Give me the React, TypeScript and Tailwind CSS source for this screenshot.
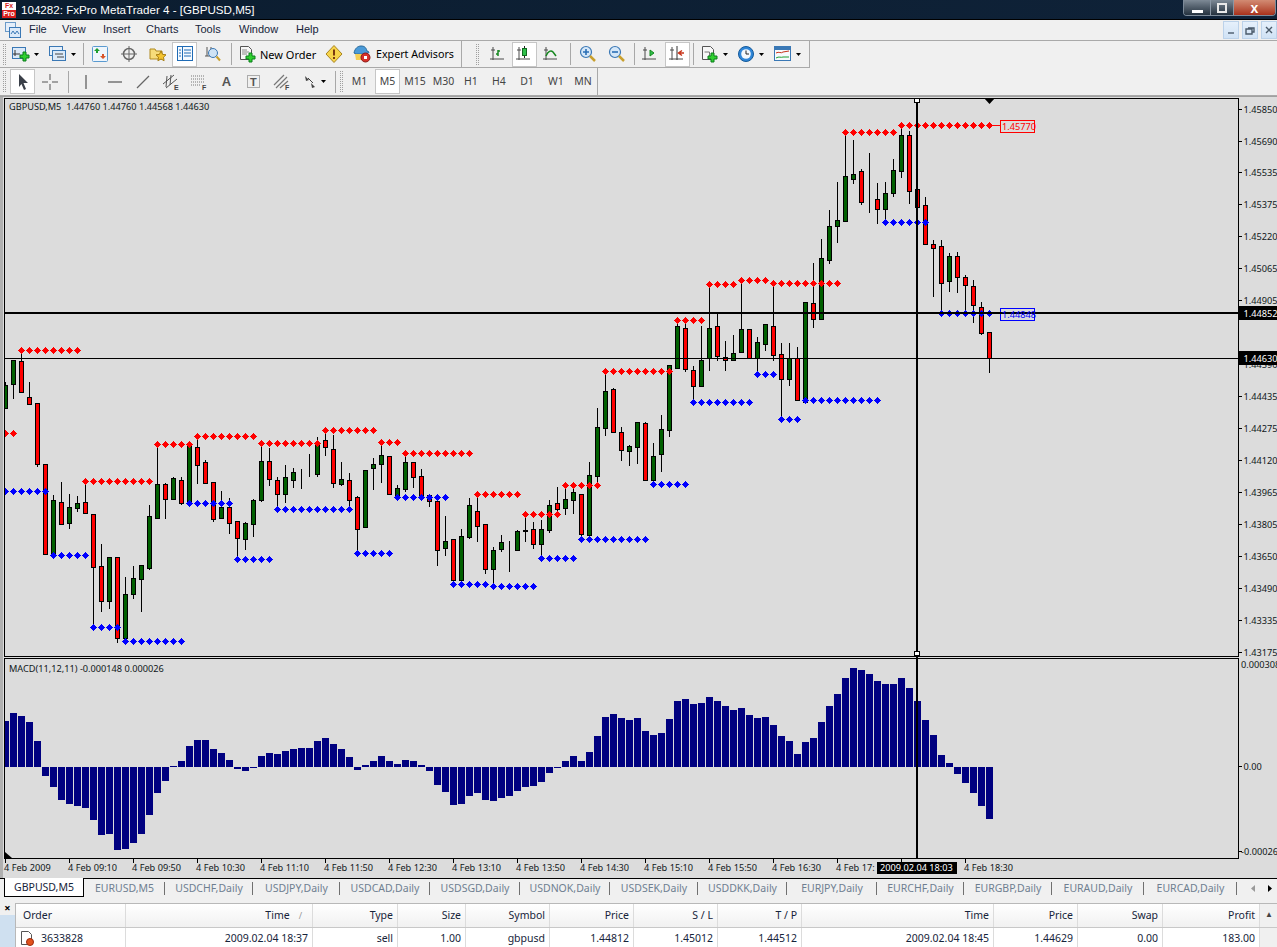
import type { ReactNode } from 'react';

// candle rows as read off the chart: [high, bodyTop, bodyBottom, low, colour], stored at 3x
type Candle = [number, number, number, number, 'g' | 'r'];

const CANDLES_A: Candle[] = [
  [123,135,205,205,'g'],[60,60,133,173,'g'],[40,63,157,157,'r'],[123,171,193,193,'r'],[190,190,371,377,'r'],
  [373,373,643,643,'r'],[462,481,643,643,'g'],[423,487,551,551,'r'],[459,501,548,563,'g'],[465,489,503,513,'g'],
  [430,487,518,518,'r'],[523,523,680,860,'r'],[609,679,782,812,'r'],[648,651,782,803,'g'],[652,652,893,905,'r'],
  [708,763,893,893,'g'],[675,715,761,773,'g'],[675,676,716,812,'g'],[492,529,684,686,'g'],[315,433,533,533,'g'],
  [427,433,476,533,'r'],[408,415,476,476,'g'],[408,421,488,491,'r'],[315,318,485,490,'g'],[295,322,374,428,'r'],
  [358,367,428,428,'r'],[427,427,536,542,'r'],[450,502,533,533,'g'],[471,502,548,578,'r'],[544,544,593,655,'r'],
  [543,550,596,627,'g'],[475,481,551,587,'g'],[315,364,479,482,'g'],[320,364,418,435,'r'],[408,421,461,505,'r'],
  [372,412,461,486,'g'],[380,397,419,440,'g'],[385,403,403,444,'g'],[340,397,397,408,'g'],[289,312,401,408,'g'],
  [280,301,320,345,'r'],[282,328,428,440,'r'],[363,418,431,434,'g'],[396,421,479,505,'r'],[465,472,566,640,'r'],
  [388,391,560,560,'g'],[351,373,383,446,'g'],[310,346,371,425,'g'],[349,349,461,461,'r'],[433,445,467,470,'g'],
  [345,367,446,452,'g'],[363,367,410,440,'r'],[385,409,464,464,'r'],[460,466,484,497,'r'],[484,484,629,675,'r'],
  [525,604,623,645,'g'],[598,598,719,730,'r'],[565,589,719,722,'g'],[472,496,590,593,'g'],[470,514,557,602,'r'],
  [553,553,686,698,'r'],[618,631,686,740,'g'],[582,607,627,632,'g'],[601,610,610,692,'g'],[568,574,629,629,'g'],
  [530,570,572,603,'g'],[543,568,611,623,'r'],[537,568,611,655,'g'],[478,496,570,576,'g'],[438,490,506,525,'r'],
  [445,478,503,522,'g'],[445,457,479,518,'g'],[460,463,581,590,'r'],[363,406,584,590,'g'],[201,262,407,430,'g'],
  [100,154,263,284,'g'],[142,148,275,275,'r'],[258,277,331,360,'r'],[312,319,332,374,'g'],[247,247,322,368,'g'],
];

const CANDLES_B: Candle[] = [
  [963,969,1140,1140,'r'],[1026,1068,1140,1140,'g'],[942,987,1062,1113,'g'],[796,796,990,1007,'g'],
  [660,679,803,803,'g'],[660,685,806,812,'r'],[796,811,857,905,'r'],[675,781,857,857,'g'],[553,685,775,809,'g'],
  [640,679,769,781,'r'],[720,772,781,809,'r'],[702,760,781,781,'g'],[541,688,757,757,'g'],[688,688,773,775,'r'],
  [708,727,773,823,'g'],[670,673,733,750,'g'],[550,679,766,781,'r'],[726,763,838,958,'r'],[726,775,838,855,'g'],
  [738,775,901,901,'r'],[605,606,905,905,'g'],[486,610,658,680,'r'],[415,475,658,658,'g'],[327,379,479,488,'g'],
  [243,361,379,426,'g'],[100,229,364,364,'g'],[118,223,236,248,'g'],[205,214,307,311,'r'],[157,305,307,335,'g'],
  [247,298,328,370,'r'],[243,280,328,360,'g'],[175,211,280,287,'g'],[85,106,214,230,'g'],[90,106,274,308,'r'],
  [268,268,322,322,'r'],[289,316,433,433,'r'],[418,433,445,587,'r'],[418,439,550,640,'r'],[457,469,544,572,'g'],
  [454,469,532,576,'r'],[522,532,556,640,'r'],[538,559,616,665,'r'],[604,622,700,703,'r'],[697,697,775,815,'r'],
];

// [first bar, last bar, y]
const RED_ROWS = [[2,9,350],[0,1,433],[10,18,481],[19,23,444],[24,31,436],[32,39,443],[40,46,430],[47,49,442],[50,58,453],[59,64,494],[65,69,514],[70,74,485],[75,83,371],[84,87,320],[88,91,284],[92,95,280],[96,104,283],[105,111,132],[112,123,125]];
const BLUE_ROWS = [[0,5,491],[6,10,555],[11,14,627],[15,22,641],[23,28,503],[29,33,559],[34,43,509],[44,48,553],[49,55,497],[56,60,584],[61,66,586],[67,71,558],[72,80,539],[81,85,484],[86,93,402],[94,96,374],[97,99,419],[100,109,400],[110,115,222],[117,123,313]];

const MACD = [198,174,183,201,258,363,396,435,447,453,459,495,540,537,585,582,564,537,480,414,378,333,318,273,255,255,282,294,315,342,348,339,303,294,297,288,282,279,279,258,249,267,282,306,345,330,318,303,318,327,315,318,330,348,390,411,450,447,423,414,435,438,429,423,408,396,393,381,354,339,318,303,318,291,243,186,177,189,195,189,228,240,234,192,138,132,147,144,126,138,153,165,159,180,189,186,210,243,258,297,261,249,201,153,117,69,39,45,57,78,87,87,69,99,138,195,240,300,324,357,384,414,453,492];

const PRICE_LABELS: [string, number][] = [
  ['1.45850',110],['1.45690',142],['1.45535',173],['1.45375',205],['1.45220',237],['1.45065',269],['1.44905',301],
  ['1.44590',365],['1.44435',397],['1.44275',429],['1.44120',461],['1.43965',493],['1.43805',525],['1.43650',557],
  ['1.43490',589],['1.43335',621],['1.43175',653],
];

const TIME_LABELS = ['4 Feb 2009','4 Feb 09:10','4 Feb 09:50','4 Feb 10:30','4 Feb 11:10','4 Feb 11:50','4 Feb 12:30','4 Feb 13:10','4 Feb 13:50','4 Feb 14:30','4 Feb 15:10','4 Feb 15:50','4 Feb 16:30','4 Feb 17:'];

const TABS: [string, number][] = [
  ['EURUSD,M5',81],['USDCHF,Daily',88],['USDJPY,Daily',87],['USDCAD,Daily',90],['USDSGD,Daily',90],['USDNOK,Daily',90],
  ['USDSEK,Daily',88],['USDDKK,Daily',89],['EURJPY,Daily',90],['EURCHF,Daily',87],['EURGBP,Daily',88],['EURAUD,Daily',92],['EURCAD,Daily',93],
];

function Candles() {
  const all = [
    ...CANDLES_A.map((c, i) => ({ c, i, off: 340 })),
    ...CANDLES_B.map((c, i) => ({ c, i: i + 80, off: 100 })),
  ];
  return (
    <g shapeRendering="crispEdges">
      {all.map(({ c, i, off }) => {
        const [hi, top, bot, lo, col] = c;
        const y = (v: number) => Math.round(off + v / 3) + 0.5;
        const x = 5.5 + 8 * i;
        return (
          <g key={i}>
            <line x1={x} x2={x} y1={y(hi)} y2={y(lo)} stroke="#000" />
            <rect x={x - 2} y={y(top)} width={4} height={Math.max(0, y(bot) - y(top))} fill={col === 'g' ? '#006000' : '#ff0000'} stroke="#000" />
          </g>
        );
      })}
    </g>
  );
}

function Dots({ rows, color }: { rows: number[][]; color: string }) {
  const pts: [number, number][] = [];
  rows.forEach(([a, b, y]) => {
    for (let i = a; i <= b; i++) pts.push([5.5 + 8 * i, y]);
  });
  return (
    <g fill={color} shapeRendering="crispEdges">
      {pts.map(([x, y]) => (
        <path key={`${x}-${y}`} d={`M${x - 0.5} ${y - 3}h1v1h1v1h1v1h1v1h-1v1h-1v1h-1v1h-1v-1h-1v-1h-1v-1h-1v-1h1v-1h1v-1h1z`} />
      ))}
    </g>
  );
}

function ChartView() {
  const font = "text-[9.2px] font-['Noto_Sans',sans-serif]";
  const txt = `${font} fill-[#101820]`;
  return (
    <svg width={1277} height={782} viewBox="0 96 1277 782" className="block shrink-0 bg-[#dcdcdc]">
      <Candles />
      <Dots rows={RED_ROWS} color="#ff0000" />
      <Dots rows={BLUE_ROWS} color="#0000ff" />

      {/* macd histogram */}
      <g fill="#000080" shapeRendering="crispEdges">
        {MACD.map((v, i) => {
          const y = Math.round(655 + v / 3);
          return <rect key={i} x={2 + 8 * i} y={Math.min(y, 767)} width={7} height={Math.abs(y - 767)} />;
        })}
      </g>

      {/* left edge of the mdi window hides the clipped first bar */}
      <rect x={0} y={96} width={4} height={782} fill="#dcdcdc" />
      <rect x={0} y={96} width={3} height={782} fill="#b0b0b0" />
      <line x1={0} x2={1277} y1={96.5} y2={96.5} stroke="#a0a0a0" />

      {/* level lines and crosshair */}
      <g shapeRendering="crispEdges">
        <line x1={990} x2={1000} y1={125.5} y2={125.5} stroke="#ff0000" />
        <rect x={1000.5} y={120.5} width={34} height={12} fill="#dcdcdc" stroke="#ff0000" />
        <rect x={1000.5} y={308.5} width={34} height={12} fill="#dcdcdc" stroke="#0000ff" />
        <line x1={4} x2={1238} y1={313} y2={313} stroke="#000" strokeWidth={2} />
        <line x1={4} x2={1238} y1={358.5} y2={358.5} stroke="#000" />
        <line x1={917} x2={917} y1={98} y2={858} stroke="#000" strokeWidth={2} />
        <rect x={914.5} y={98.5} width={5} height={4} fill="#fff" stroke="#000" />
        <rect x={914.5} y={651.5} width={5} height={4} fill="#fff" stroke="#000" />
      </g>
      <path d="M984 98h11l-5.500 6z" fill="#000" />
      <path d="M5 852l7 6h-7z" fill="#000" />
      <text x={1002} y={130} className={`${font} fill-[#ff0000]`}>1.45770</text>
      <text x={1002} y={318} className={`${font} fill-[#0000ff]`}>1.44848</text>

      {/* frames */}
      <g fill="none" stroke="#000" shapeRendering="crispEdges">
        <rect x={4.5} y={98.5} width={1234} height={558} />
        <rect x={4.5} y={658.5} width={1234} height={200} />
      </g>

      <text x={9} y={110} className={txt} xmlSpace="preserve">GBPUSD,M5  1.44760 1.44760 1.44568 1.44630</text>
      <text x={9} y={672} className={txt}>MACD(11,12,11) -0.000148 0.000026</text>

      {/* price axis */}
      {PRICE_LABELS.map(([p, y]) => (
        <g key={p}>
          <line x1={1239} x2={1242} y1={y - 0.5} y2={y - 0.5} stroke="#000" />
          <text x={1243.5} y={y + 3} className={txt}>{p}</text>
        </g>
      ))}
      <rect x={1239} y={306} width={38} height={14} fill="#000" />
      <text x={1243.5} y={317} className={`${font} fill-white`}>1.44852</text>
      <rect x={1239} y={351} width={38} height={14} fill="#000" />
      <text x={1243.5} y={362} className={`${font} fill-white`}>1.44630</text>
      <text x={1241} y={668} className={txt}>0.000308</text>
      <line x1={1239} x2={1242} y1={766.5} y2={766.5} stroke="#000" />
      <text x={1243.5} y={770} className={txt}>0.00</text>
      <line x1={1239} x2={1242} y1={851.5} y2={851.5} stroke="#000" />
      <text x={1241} y={855} className={txt}>-0.00026</text>

      {/* time axis */}
      {TIME_LABELS.map((t, i) => (
        <g key={t}>
          <line x1={5.5 + 64 * i} x2={5.5 + 64 * i} y1={859} y2={863} stroke="#000" />
          <text x={4 + 64 * i} y={871} className={txt}>{t}</text>
        </g>
      ))}
      <line x1={901.5} x2={901.5} y1={859} y2={863} stroke="#000" />
      <line x1={965.5} x2={965.5} y1={859} y2={863} stroke="#000" />
      <rect x={877} y={862} width={80} height={12} fill="#000" />
      <text x={880} y={871} className={`${font} fill-white`}>2009.02.04 18:03</text>
      <text x={964} y={871} className={txt}>4 Feb 18:30</text>
    </svg>
  );
}

/* ---------- toolbar icons ---------- */

const Plus = ({ x, y }: { x: number; y: number }) => (
  <path transform={`translate(${x} ${y})`} d="M3 0h3v3h3v3H6v3H3V6H0V3h3z" fill="#2fd02f" stroke="#0b7d1d" strokeWidth={1} />
);

const Svg = ({ w = 18, children }: { w?: number; children: ReactNode }) => (
  <svg width={w} height={18} viewBox={`0 0 ${w} 18`} className="shrink-0">{children}</svg>
);

const Axes = () => <path d="M3 2v13M0 14h14M1 5h4" stroke="#4a4a4a" fill="none" />;

const Caret = () => <svg width={5} height={3} viewBox="0 0 5 3" className="ml-[4px] shrink-0"><path d="M0 0h5L2.500 3z" fill="#000" /></svg>;

function ChartPlusIcon() {
  return <Svg><rect x={.5} y={2.500} width={13} height={11} fill="#dbe9f8" stroke="#3a78b5" /><path d="M3 5v6M1 9h7" stroke="#333" /><Plus x={8} y={7} /></Svg>;
}
function ProfilesIcon() {
  return <Svg><rect x={.5} y={1.500} width={13} height={9} fill="#e6f0fa" stroke="#3a78b5" /><rect x={3.500} y={5.500} width={13} height={10} fill="#dbe9f8" stroke="#3a78b5" /><path d="M6 9h8M8 12h7" stroke="#444" /></Svg>;
}
function WatchIcon() {
  return <Svg><rect x={1.500} y={1.500} width={15} height={15} rx={1} fill="#eef5fc" stroke="#5a9ad0" /><path d="M6 3l3 3H7v2H5V6H3z" fill="#1d9e2f" /><path d="M12 14l-3-3h2V9h2v2h2z" fill="#d8542a" /></Svg>;
}
function TargetIcon() {
  return <Svg><circle cx={9} cy={9} r={5.500} fill="none" stroke="#666" strokeWidth={1.500} /><path d="M9 1v16M1 9h16" stroke="#666" /></Svg>;
}
function FavIcon() {
  return <Svg><path d="M1 4h5l1 2h6v8H1z" fill="#f6dc7a" stroke="#b08a20" /><path d="M12 6l1.600 3.400 3.400.4-2.500 2.400.6 3.500-3.100-1.700-3.100 1.700.6-3.500L7 9.800l3.400-.4z" fill="#f4c430" stroke="#a67c10" /></Svg>;
}
function NavIcon() {
  return <Svg><rect x={1.500} y={1.500} width={15} height={14} fill="#f5faff" stroke="#1f6bb5" /><path d="M6.500 2v13" stroke="#1f6bb5" /><path d="M3 5h2M3 8h2M3 11h2M8 5h7M8 8h7M8 11h7" stroke="#1f6bb5" /></Svg>;
}
function DataIcon() {
  return <Svg><path d="M3 2v9M7 2v9M1 11h11" stroke="#555" /><circle cx={9} cy={8} r={4.500} fill="#cfe3f5" stroke="#3a78b5" /><path d="M12.500 11.500l3.500 4" stroke="#c8a030" strokeWidth={2} /></Svg>;
}
function OrderIcon() {
  return <Svg><path d="M1.500 1.500h8l3 3v10h-11z" fill="#f7f7f7" stroke="#555" /><path d="M3 5h5M3 7h7M3 9h5" stroke="#888" /><Plus x={7} y={8} /></Svg>;
}
function WarnIcon() {
  return <Svg><path d="M9 .5L17 9l-8 8.500L1 9z" fill="#f7d44a" stroke="#a88420" /><path d="M9 4.500v6" stroke="#7a3a10" strokeWidth={2} /><path d="M9 12v2" stroke="#7a3a10" strokeWidth={2} /></Svg>;
}
function ExpertIcon() {
  return <Svg><path d="M1 8c1-5 4-7 7-7s5 1 6 5l2 1c1 2-13 3-15 1z" fill="#4a9ad8" stroke="#2a6a9a" /><path d="M2 9h11v6H3z" fill="#f4cf55" /><circle cx={12.500} cy={12.500} r={4.500} fill="#d6322a" stroke="#8c1a16" /><rect x={11} y={11} width={3} height={3} fill="#fff" /></Svg>;
}
function BarsIcon() {
  return <Svg><Axes /><path d="M8 11V5M6 9h2M8 6h2" stroke="#15871f" strokeWidth={1.500} fill="none" /></Svg>;
}
function CandleIcon() {
  return <Svg><Axes /><path d="M8.500 1v12" stroke="#222" /><rect x={6.500} y={3.500} width={4} height={7} fill="#2fc04a" stroke="#146b22" /></Svg>;
}
function LineIcon() {
  return <Svg><Axes /><path d="M3 11c2-5 5-6 7-4l3 4" stroke="#15871f" strokeWidth={1.500} fill="none" /></Svg>;
}
function ZoomIcon({ minus }: { minus?: boolean }) {
  return <Svg><circle cx={7} cy={7} r={5.500} fill="#d5e7f8" stroke="#3b78b5" strokeWidth={1.200} /><path d={minus ? 'M4 7h6' : 'M4 7h6M7 4v6'} stroke="#2a6fb5" strokeWidth={1.600} /><path d="M11 11l5 5" stroke="#c9a02e" strokeWidth={2.500} /></Svg>;
}
function ScrollIcon() {
  return <Svg><Axes /><path d="M8 5l4 3-4 3z" fill="#2fc04a" stroke="#15871f" /></Svg>;
}
function ShiftIcon() {
  return <Svg><Axes /><path d="M8 1v14" stroke="#333" /><path d="M15 8H10m3-2.500L9.500 8l3.500 2.500" stroke="#c8341a" fill="none" strokeWidth={1.500} /></Svg>;
}
function IndicatorIcon() {
  return <Svg><path d="M1.500 1.500h8l3 3v10h-11z" fill="#f7f7f7" stroke="#555" /><path d="M3.500 7h5v5" stroke="#777" fill="none" /><Plus x={7} y={8} /></Svg>;
}
function ClockIcon() {
  return <Svg><circle cx={9} cy={9} r={7.500} fill="#2f86d8" stroke="#145a9a" /><circle cx={9} cy={9} r={4.800} fill="#f3f8fc" /><path d="M9 5.500V9h3" stroke="#222" fill="none" /></Svg>;
}
function TemplateIcon() {
  return <Svg><rect x={.5} y={1.500} width={16} height={14} fill="#f7fafd" stroke="#3a78b5" /><rect x={1} y={2} width={15} height={3} fill="#3a78b5" /><path d="M2 8c3-2 5 1 7-1l6-1" stroke="#c8341a" fill="none" /><path d="M2 13c3-2 5 0 7-1l6 0" stroke="#1d9e2f" fill="none" /></Svg>;
}
function CursorIcon() {
  return <Svg><path d="M5 1l9 9H9.500l2.500 6-2 1-2.500-6L5 14z" fill="#3a3f48" /></Svg>;
}
function CrossIcon() {
  return <Svg><path d="M9 1v6M9 11v6M1 9h6M11 9h6" stroke="#555" /></Svg>;
}
function VLineIcon() {
  return <Svg><path d="M9 2v14" stroke="#555" strokeWidth={1.200} /></Svg>;
}
function HLineIcon() {
  return <Svg><path d="M2 9h14" stroke="#555" strokeWidth={1.200} /></Svg>;
}
function TrendIcon() {
  return <Svg><path d="M3 15L15 3" stroke="#666" strokeWidth={1.200} /></Svg>;
}
function ChannelIcon() {
  return <Svg><path d="M1 11L12 2M4 15L15 6M5 3l-1 11M9 2l-1 10" stroke="#555" /><text x={12} y={17} className="text-[7px] fill-[#444] font-bold font-['Liberation_Sans',sans-serif]">E</text></Svg>;
}
function FiboIcon() {
  return <Svg><path d="M1 3h14M1 6h14M1 9h14M1 12h10" stroke="#777" strokeDasharray="1 1" /><text x={12} y={17} className="text-[7px] fill-[#444] font-bold font-['Liberation_Sans',sans-serif]">F</text></Svg>;
}
function TextIcon() {
  return <span className="text-[13px] font-bold text-[#555] leading-none font-['Liberation_Sans',sans-serif]">A</span>;
}
function LabelIcon() {
  return <Svg><rect x={2.500} y={2.500} width={12} height={12} fill="none" stroke="#666" strokeDasharray="1 1" /><text x={5} y={13} className="text-[11px] fill-[#555] font-bold font-['Liberation_Sans',sans-serif]">T</text></Svg>;
}
function GannIcon() {
  return <Svg><path d="M1 12L11 2M3 15L14 4M7 15L15 8" stroke="#777" strokeWidth={1.200} /><text x={12} y={17} className="text-[7px] fill-[#444] font-bold font-['Liberation_Sans',sans-serif]">F</text></Svg>;
}
function ArrowsIcon() {
  return <Svg w={14}><path d="M2 3l4 4-3 1zM8 10l4 4-3 1z" fill="#444" /><path d="M5 5l5 5" stroke="#444" /></Svg>;
}

/* ---------- chrome ---------- */

function Btn({ w, active, pl, children }: { w: number; active?: boolean; pl?: number; children: ReactNode }) {
  return (
    <div
      style={{ width: w, paddingLeft: pl }}
      className={`h-[25px] shrink-0 flex items-center ${pl === undefined ? 'justify-center' : ''} ${active ? 'bg-white border border-[#c6c6c6]' : ''}`}
    >
      {children}
    </div>
  );
}

const Sep = () => <div className="w-[6px] shrink-0 flex justify-center"><div className="w-px h-[22px] bg-[#a8a8a8]" /></div>;

const Grip = () => <div className="w-[3px] h-[21px] shrink-0 border-x border-dotted border-[#a0a0a0]" />;

function TitleBar() {
  return (
    <div className="h-[20px] shrink-0 flex items-center bg-gradient-to-r from-[#0b1d30] to-[#0f2238] border-b border-[#000]">
      <div className="ml-[2px] w-[14px] h-[16px] flex flex-col text-center text-[7px] leading-[8px] font-bold font-['Liberation_Sans',sans-serif]">
        <span className="bg-white text-[#d81e1e]">Fx</span>
        <span className="bg-[#d81e1e] text-white">Pro</span>
      </div>
      <span className="ml-[5px] text-[11.6px] leading-none text-white font-['Liberation_Sans',sans-serif]">104282: FxPro MetaTrader 4 - [GBPUSD,M5]</span>
      <div className="ml-auto mr-px h-[16px] flex self-start rounded-b-[4px] border border-t-0 border-[#7c8a99] overflow-hidden">
        <div className="w-[26px] bg-gradient-to-b from-[#7e8a96] to-[#25323f] flex items-end justify-center pb-[2px]"><div className="w-[11px] h-[3px] bg-white" /></div>
        <div className="w-[24px] bg-gradient-to-b from-[#7e8a96] to-[#25323f] border-x border-[#8a97a5] flex items-center justify-center"><div className="w-[10px] h-[10px] border-2 border-[#e8e8e8]" /></div>
        <div className="w-[41px] bg-gradient-to-b from-[#d28b73] to-[#a8301a] flex items-center justify-center text-white text-[14px] font-bold leading-none font-['Liberation_Sans',sans-serif]">x</div>
      </div>
    </div>
  );
}

function MdiButton({ d }: { d: string }) {
  return (
    <div className="w-[16px] h-[18px] bg-gradient-to-b from-[#e6f0fb] to-[#d0e2f5] border border-[#bcd2ea] flex items-center justify-center">
      <svg width={10} height={10} viewBox="0 0 10 10"><path d={d} fill="none" stroke="#4a5a6a" strokeWidth={1.400} /></svg>
    </div>
  );
}

function MenuBar() {
  const items: [string, number][] = [['File', 29], ['View', 62], ['Insert', 103], ['Charts', 146], ['Tools', 195], ['Window', 239], ['Help', 296]];
  return (
    <div className="h-[21px] shrink-0 relative bg-[#f0f0f0] border-b border-[#a9a9a9] text-[11px] text-[#16243a] font-['Liberation_Sans',sans-serif]">
      <svg width={16} height={16} viewBox="0 0 16 16" className="absolute left-[5px] top-[2px]">
        <rect x={.5} y={.5} width={10} height={9} fill="#e4eefa" stroke="#6a9ac8" />
        <rect x={4.500} y={5.500} width={11} height={10} fill="#dbe9f8" stroke="#3a78b5" />
        <path d="M6 12l2-3 2 3 2-3 2 3" stroke="#3a78b5" fill="none" />
      </svg>
      {items.map(([t, x]) => (
        <span key={t} style={{ left: x }} className="absolute top-[4px]">{t}</span>
      ))}
      <div className="absolute right-0 top-px flex gap-[3px]">
        <MdiButton d="M2 8h6" />
        <MdiButton d="M3 3h6v4H7M1 4h6v5H1z" />
        <MdiButton d="M2 2l6 6M8 2L2 8" />
      </div>
    </div>
  );
}

function ToolbarOne() {
  return (
    <div className="h-[27px] shrink-0 flex bg-[#f0f0f0]">
      <div className="w-[462px] flex items-center pl-[3px] border-b border-r border-[#a9a9a9]">
        <Grip />
        <Btn w={38}><ChartPlusIcon /><Caret /></Btn>
        <Btn w={36}><ProfilesIcon /><Caret /></Btn>
        <Sep />
        <Btn w={28}><WatchIcon /></Btn>
        <Btn w={29}><TargetIcon /></Btn>
        <Btn w={29}><FavIcon /></Btn>
        <Btn w={25} active><NavIcon /></Btn>
        <Btn w={31}><DataIcon /></Btn>
        <Sep />
        <Btn w={86} pl={5}><OrderIcon /><span className="ml-[3px] whitespace-nowrap">New Order</span></Btn>
        <Btn w={28}><WarnIcon /></Btn>
        <Btn w={110} pl={5}><ExpertIcon /><span className="ml-[5px] whitespace-nowrap text-[10.7px]">Expert Advisors</span></Btn>
      </div>
      <div className="w-[14px] border-b border-[#a9a9a9]" />
      <div className="w-[334px] flex items-center border-b border-r border-[#a9a9a9]">
        <Grip />
        <div className="w-[6px]" />
        <Btn w={27}><BarsIcon /></Btn>
        <Btn w={25} active><CandleIcon /></Btn>
        <Btn w={30}><LineIcon /></Btn>
        <Sep />
        <Btn w={29}><ZoomIcon /></Btn>
        <Btn w={29}><ZoomIcon minus /></Btn>
        <Sep />
        <Btn w={28}><ScrollIcon /></Btn>
        <Btn w={25} active><ShiftIcon /></Btn>
        <Sep />
        <Btn w={36}><IndicatorIcon /><Caret /></Btn>
        <Btn w={37}><ClockIcon /><Caret /></Btn>
        <Btn w={37}><TemplateIcon /><Caret /></Btn>
      </div>
    </div>
  );
}

function ToolbarTwo() {
  const periods: [string, number, boolean?][] = [['M1', 31], ['M5', 25, true], ['M15', 30], ['M30', 27], ['H1', 28], ['H4', 28], ['D1', 28], ['W1', 30], ['MN', 24]];
  return (
    <div className="h-[28px] shrink-0 flex bg-[#f0f0f0] border-b border-[#a9a9a9]">
      <div className="w-[598px] flex items-center pl-[3px] border-r border-[#a9a9a9]">
        <Grip />
        <div className="w-[4px]" />
        <Btn w={25} active><CursorIcon /></Btn>
        <Btn w={30}><CrossIcon /></Btn>
        <Sep />
        <Btn w={30}><VLineIcon /></Btn>
        <Btn w={28}><HLineIcon /></Btn>
        <Btn w={28}><TrendIcon /></Btn>
        <Btn w={28}><ChannelIcon /></Btn>
        <Btn w={28}><FiboIcon /></Btn>
        <Btn w={27}><TextIcon /></Btn>
        <Btn w={28}><LabelIcon /></Btn>
        <Btn w={28}><GannIcon /></Btn>
        <Btn w={36}><ArrowsIcon /><Caret /></Btn>
        <Sep />
        <div className="w-[2px]" />
        <Grip />
        <div className="w-px" />
        {periods.map(([p, w, on]) => (
          <Btn key={p} w={w} active={on}><span className="text-[#444] text-[10.5px]">{p}</span></Btn>
        ))}
      </div>
    </div>
  );
}

function TabBar() {
  return (
    <div className="h-[19px] shrink-0 flex items-stretch bg-[#f0f0f0] border-t border-[#000] pl-[4px] text-[10.5px]">
      <div className="w-[80px] -mt-px bg-white border border-t-0 border-[#000] flex items-center justify-center text-[#16243a]">GBPUSD,M5</div>
      {TABS.map(([t, w]) => (
        <div key={t} style={{ width: w }} className="shrink-0 flex items-center justify-center text-[#6f7f90] relative whitespace-nowrap">
          {t}
          <span className="absolute right-0 top-[3px] h-[13px] w-px bg-[#707070]" />
        </div>
      ))}
      <div className="flex-1 flex items-center justify-end gap-[13px] pr-[5px]">
        <svg width={4} height={7} viewBox="0 0 4 7"><path d="M4 0v7L0 3.500z" fill="#999" /></svg>
        <svg width={4} height={7} viewBox="0 0 4 7"><path d="M0 0v7l4-3.500z" fill="#000" /></svg>
      </div>
    </div>
  );
}

const COLS = 'grid grid-cols-[110px_187px_85px_68px_84px_84px_84px_84px_192px_84px_85px_97px]';

function Cell({ left, children }: { left?: boolean; children: ReactNode }) {
  return <div className={`flex items-center border-r border-[#dcdcdc] min-w-0 ${left ? 'pl-[7px]' : 'justify-end pr-[4px]'}`}>{children}</div>;
}

function Terminal() {
  const head = ['Order', 'Time', 'Type', 'Size', 'Symbol', 'Price', 'S / L', 'T / P', 'Time', 'Price', 'Swap', 'Profit'];
  const row = ['2009.02.04 18:37', 'sell', '1.00', 'gbpusd', '1.44812', '1.45012', '1.44512', '2009.02.04 18:45', '1.44629', '0.00', '183.00'];
  return (
    <div className="flex-1 flex min-h-0 mt-[6px] bg-[#f0f0f0] text-[10.5px]">
      <div className="w-[15px] shrink-0 flex flex-col">
        <div className="h-[12px] text-[11px] leading-[10px] font-bold text-center text-black">×</div>
        <div className="flex-1 bg-[#cfe0f0]" />
      </div>
      <div className="flex-1 flex flex-col border-t border-l border-[#b8b8b8] bg-white min-w-0">
        <div className="h-[24px] shrink-0 flex border-b border-[#c8c8c8] bg-gradient-to-b from-white to-[#f1f1f1]">
          <div className={`${COLS} flex-1 text-[#16243a]`}>
            {head.map((h, i) => (
              <Cell key={i} left={i === 0}>
                {h}
                {i === 1 && <span className="ml-[9px] mr-[6px] text-[#999] text-[9px]">/</span>}
              </Cell>
            ))}
          </div>
          <div className="w-[18px] shrink-0 bg-[#f0f0f0] text-center text-[8px] leading-[20px] text-[#444]">▲</div>
        </div>
        <div className="h-[20px] shrink-0 flex">
          <div className={`${COLS} flex-1 text-[#16243a]`}>
            <Cell left>
              <svg width={15} height={16} viewBox="0 0 15 16" className="shrink-0 -ml-[3px]">
                <path d="M1.500 1.500h7l3 3v10h-10z" fill="#fff" stroke="#555" />
                <circle cx={10} cy={12} r={3.500} fill="#e2521c" stroke="#9c2a0c" />
              </svg>
              <span className="ml-[6px]">3633828</span>
            </Cell>
            {row.map((v, i) => <Cell key={i}>{v}</Cell>)}
          </div>
          <div className="w-[18px] shrink-0 bg-[#f0f0f0]" />
        </div>
      </div>
    </div>
  );
}

export default function App() {
  return (
    <div className="w-[1277px] h-[947px] flex flex-col overflow-hidden bg-[#f0f0f0] text-[11px] leading-none font-['Noto_Sans',sans-serif]">
      <TitleBar />
      <MenuBar />
      <ToolbarOne />
      <ToolbarTwo />
      <ChartView />
      <TabBar />
      <Terminal />
    </div>
  );
}
